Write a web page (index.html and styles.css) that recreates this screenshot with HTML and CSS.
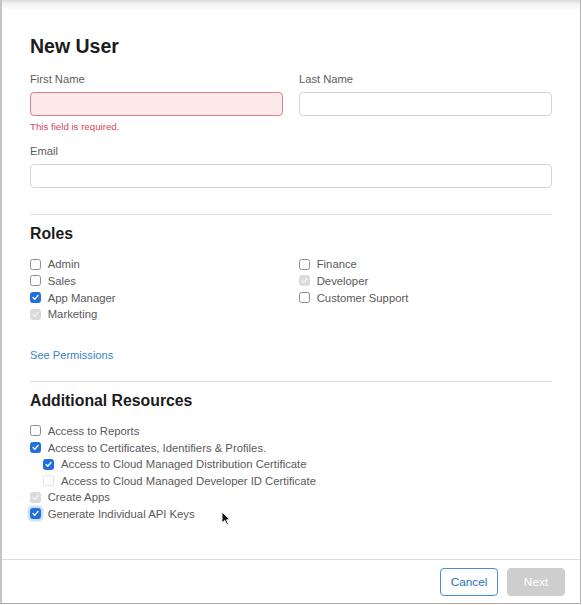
FILE: index.html
```html
<!DOCTYPE html>
<html lang="en">
<head>
<meta charset="utf-8">
<title>New User</title>
<link rel="stylesheet" href="styles.css">
</head>
<body>
<div class="dialog">
  <div class="content">
    <h1 class="title">New User</h1>
    <div class="grid2 names">
      <div class="field">
        <label class="label">First Name</label>
        <input class="input input-error" type="text">
        <div class="error">This field is required.</div>
      </div>
      <div class="field">
        <label class="label">Last Name</label>
        <input class="input" type="text">
      </div>
    </div>
    <div class="field email">
      <label class="label">Email</label>
      <input class="input" type="text">
    </div>
    <hr class="rule rule-top">
    <h2 class="section">Roles</h2>
    <div class="grid2 roles">
      <ul class="checks">
        <li class="check"><span class="cb"></span>Admin</li>
        <li class="check"><span class="cb"></span>Sales</li>
        <li class="check"><span class="cb on"><svg viewBox="0 0 11 11"><path d="M2.6 5.6 L4.6 7.8 L8.5 3.1"/></svg></span>App Manager</li>
        <li class="check"><span class="cb dis-on"><svg viewBox="0 0 11 11"><path d="M2.6 5.6 L4.6 7.8 L8.5 3.1"/></svg></span>Marketing</li>
      </ul>
      <ul class="checks">
        <li class="check"><span class="cb"></span>Finance</li>
        <li class="check"><span class="cb dis-on"><svg viewBox="0 0 11 11"><path d="M2.6 5.6 L4.6 7.8 L8.5 3.1"/></svg></span>Developer</li>
        <li class="check"><span class="cb"></span>Customer Support</li>
      </ul>
    </div>
    <a class="link" href="#">See Permissions</a>
    <hr class="rule rule-mid">
    <h2 class="section">Additional Resources</h2>
    <ul class="checks resources">
      <li class="check"><span class="cb"></span>Access to Reports</li>
      <li class="check"><span class="cb on"><svg viewBox="0 0 11 11"><path d="M2.6 5.6 L4.6 7.8 L8.5 3.1"/></svg></span>Access to Certificates, Identifiers &amp; Profiles.</li>
      <li class="check nested"><span class="cb on"><svg viewBox="0 0 11 11"><path d="M2.6 5.6 L4.6 7.8 L8.5 3.1"/></svg></span>Access to Cloud Managed Distribution Certificate</li>
      <li class="check nested"><span class="cb dis-off"></span>Access to Cloud Managed Developer ID Certificate</li>
      <li class="check"><span class="cb dis-on"><svg viewBox="0 0 11 11"><path d="M2.6 5.6 L4.6 7.8 L8.5 3.1"/></svg></span>Create Apps</li>
      <li class="check"><span class="cb on focus"><svg viewBox="0 0 11 11"><path d="M2.6 5.6 L4.6 7.8 L8.5 3.1"/></svg></span>Generate Individual API Keys</li>
    </ul>
  </div>
  <div class="footer">
    <button class="btn btn-cancel" type="button">Cancel</button>
    <button class="btn btn-next" type="button">Next</button>
  </div>
  <svg class="cursor" viewBox="0 0 10 15"><path d="M1 1 L1 12 L3.8 9.4 L5.8 13.8 L7.4 13.1 L5.5 8.8 L9 8.8 Z"/></svg>
</div>
</body>
</html>
```

FILE: styles.css
```css
* { box-sizing: border-box; }

html, body {
  margin: 0;
  padding: 0;
  background: #ffffff;
}

body {
  font-family: "Liberation Sans", Arial, sans-serif;
  color: #5a5a5a;
}

.dialog {
  position: relative;
  width: 581px;
  height: 604px;
  border-left: 2px solid #c4c4c4;
  border-right: 1px solid #b5b5b5;
  border-bottom: 1px solid #a9a9a9;
  background: linear-gradient(#d9d9d9 0px, #f3f3f3 4px, #ffffff 11px);
  display: flex;
  flex-direction: column;
}

.content {
  height: 559px;
  padding: 34px 28px 0 28px;
}

.title {
  margin: 0;
  font-size: 19.5px;
  line-height: 24px;
  font-weight: 700;
  color: #1b1b1b;
}

.grid2 {
  display: grid;
  grid-template-columns: 253px 253px;
  column-gap: 16px;
}

.names {
  margin-top: 14px;
}

.field {
  display: flex;
  flex-direction: column;
}

.label {
  font-size: 11.2px;
  line-height: 14px;
  color: #5c5c5c;
  margin-bottom: 6px;
}

.input {
  display: block;
  width: 100%;
  height: 24px;
  margin: 0;
  border: 1px solid #d5d5d5;
  border-radius: 4px;
  background: #ffffff;
  font: inherit;
  outline: none;
}

.input-error {
  background: #fde8ea;
  border-color: #df7d8c;
}

.error {
  margin-top: 4.5px;
  font-size: 9.7px;
  line-height: 12px;
  color: #d4485e;
}

.email {
  margin-top: 11.5px;
}

.rule {
  border: 0;
  border-top: 1px solid #dcdcdc;
  margin: 0;
  height: 0;
}

.rule-top { margin-top: 26px; }
.rule-mid { margin-top: 18.8px; }

.section {
  margin: 9.2px 0 0 0;
  font-size: 15.8px;
  line-height: 20px;
  font-weight: 700;
  color: #1b1b1b;
}

.checks {
  list-style: none;
  margin: 11.9px 0 0 0;
  padding: 0;
}

.roles .checks { margin: 0; }
.roles { margin-top: 11.9px; }

.check {
  display: flex;
  align-items: center;
  height: 16.6px;
  font-size: 11.3px;
  color: #5a5a5a;
  white-space: nowrap;
}

.check.nested {
  padding-left: 13.3px;
}

.cb {
  flex: none;
  width: 11px;
  height: 11px;
  margin-right: 6.7px;
  border: 1px solid #8e8e8e;
  border-radius: 2.5px;
  background: #ffffff;
  display: flex;
  align-items: center;
  justify-content: center;
}

.cb svg {
  width: 11px;
  height: 11px;
  fill: none;
  stroke: #ffffff;
  stroke-width: 1.7;
  stroke-linecap: round;
  stroke-linejoin: round;
}

.cb.on {
  background: #1f6fe0;
  border-color: #1f6fe0;
}

.cb.dis-on {
  background: #dadada;
  border-color: #dadada;
}

.cb.dis-on svg { stroke: #f2f2f2; }

.cb.dis-off {
  border-color: #e2e2e2;
}

.cb.focus {
  box-shadow: 0 0 0 2.5px #cfe2f4;
}

.link {
  display: block;
  margin-top: 25.3px;
  font-size: 11.1px;
  line-height: 14px;
  color: #3b84c6;
  text-decoration: none;
  width: max-content;
}

.footer {
  flex: 1;
  border-top: 1px solid #dedede;
  display: flex;
  justify-content: flex-end;
  align-items: flex-start;
  gap: 9px;
  padding: 8px 15px 0 0;
}

.btn {
  width: 58px;
  height: 28px;
  border-radius: 4px;
  font-family: "Liberation Sans", Arial, sans-serif;
  font-size: 11.8px;
  margin: 0;
  padding: 0;
}

.btn-cancel {
  background: #ffffff;
  border: 1px solid #4a8fd6;
  color: #2e6fb7;
}

.btn-next {
  background: #cecece;
  border: 1px solid #cecece;
  color: #ffffff;
}

.cursor {
  position: absolute;
  left: 219px;
  top: 511px;
  width: 10px;
  height: 15px;
}

.cursor path {
  fill: #111111;
  stroke: #ffffff;
  stroke-width: 0.9;
}
```
